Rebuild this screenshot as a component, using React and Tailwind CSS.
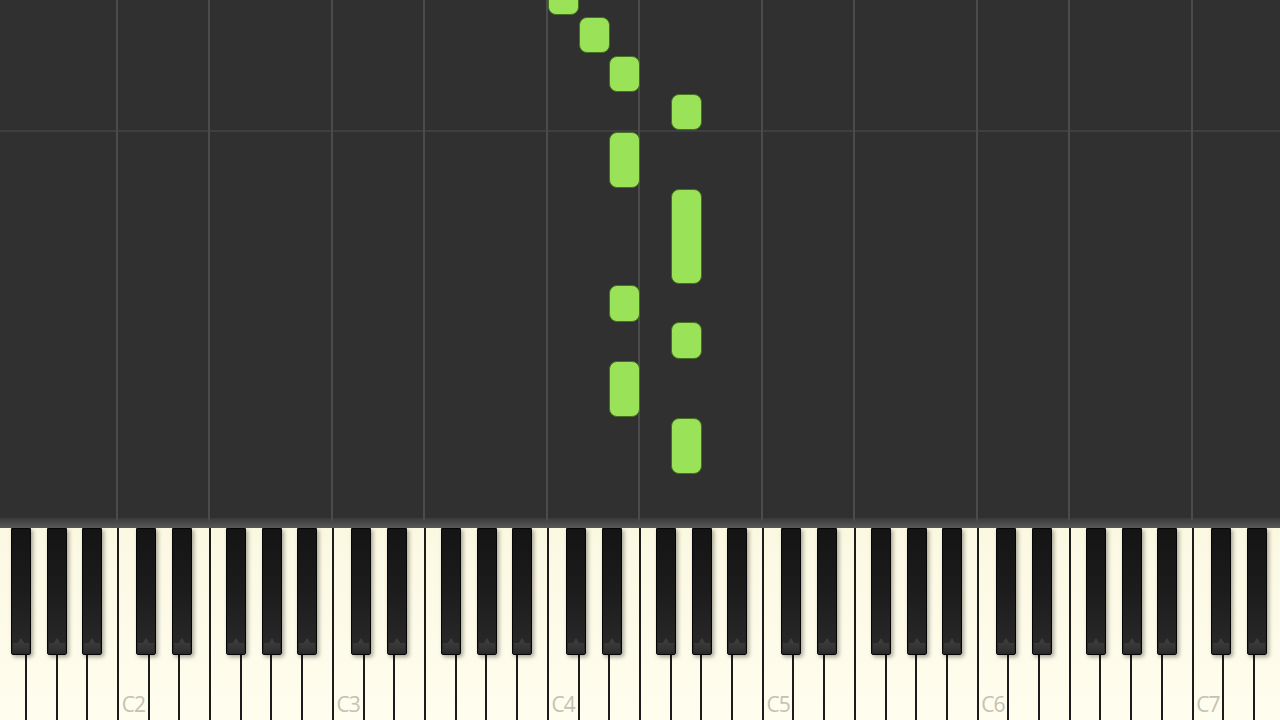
import React from 'react';

const OCTAVE = 215;
const FIRST_C = -98; // C1 left edge
const WHITE_NAMES = ['C', 'D', 'E', 'F', 'G', 'A', 'B'];
const BLACK_OFFSETS = [19, 55, 109, 145, 180];

// white keys from F1 to E7
const whiteKeys = [];
for (let i = 3; i < 3 + 42; i++) {
  const octave = 1 + Math.floor(i / 7);
  const name = WHITE_NAMES[i % 7];
  whiteKeys.push({ id: `${name}${octave}`, label: name === 'C' ? `C${octave}` : null });
}

const blackKeys = [];
for (let o = 0; o < 7; o++) {
  const start = FIRST_C + o * OCTAVE;
  BLACK_OFFSETS.forEach((off) => {
    const x = start + off;
    if (x + 20 > 0 && x < 1280) blackKeys.push(x);
  });
}

const gridLines = [117, 209, 332, 424, 547, 639, 762, 854, 977, 1069, 1192];

// column x positions for C4, D4, E4, G4
const notes = [
  { x: 548, top: -30, bottom: 15 },
  { x: 579, top: 17, bottom: 53 },
  { x: 609, top: 56, bottom: 92 },
  { x: 671, top: 94, bottom: 130 },
  { x: 609, top: 132, bottom: 188 },
  { x: 671, top: 189, bottom: 284 },
  { x: 609, top: 285, bottom: 322 },
  { x: 671, top: 322, bottom: 359 },
  { x: 609, top: 361, bottom: 417 },
  { x: 671, top: 418, bottom: 474 },
];

const App = () => {
  return (
    <div className="w-[1280px] h-[720px] overflow-hidden flex flex-col bg-[#303030]" style={{ fontFamily: '"Open Sans", "Liberation Sans", sans-serif' }}>
      {/* note roll */}
      <div className="relative h-[518px] shrink-0 bg-[#303030]">
        <div className="absolute left-0 right-0 top-[130px] h-[2px] bg-[#3f3f3f]" />
        {gridLines.map((x) => (
          <div key={x} className="absolute top-0 bottom-0 w-[2px] bg-[#4b4b4b]" style={{ left: x - 1 }} />
        ))}
        {notes.map((n, i) => (
          <div
            key={i}
            className="absolute w-[31px] rounded-[8px] border border-[#45701f] bg-[#9ae257]"
            style={{ left: n.x, top: n.top, height: n.bottom - n.top }}
          />
        ))}
      </div>

      {/* bar above keys */}
      <div className="relative h-[9px] shrink-0 bg-gradient-to-b from-[#3a3a3a] to-[#565656]">
        {gridLines.map((x) => (
          <div key={x} className="absolute top-0 h-[3px] w-[2px] bg-[#4a4a4a]" style={{ left: x - 1 }} />
        ))}
      </div>
      <div className="h-[1px] shrink-0 bg-[#b0302a]" />

      {/* keyboard */}
      <div className="relative flex-1 overflow-hidden bg-[#fdfbe7]">
        <div className="flex h-full -ml-[5.86px]">
          {whiteKeys.map((k) => (
            <div
              key={k.id}
              className="relative h-full w-[30.714px] shrink-0 border-l-2 border-[#1c1c1c] bg-gradient-to-b from-[#fbf8e2] to-[#fffdee] flex items-end justify-center pb-[5px]"
            >
              {k.label && (
                <span className="text-[21px] leading-none tracking-[-1px] text-[#c4c2b2]">{k.label}</span>
              )}
            </div>
          ))}
        </div>
        {blackKeys.map((x) => (
          <div
            key={x}
            className="absolute top-0 h-[127px] w-[20px] rounded-b-[2px] border border-[#050505] bg-gradient-to-b from-[#141414] via-[#1c1c1c] to-[#2a2a2a] shadow-[2px_2px_4px_rgba(0,0,0,0.35)] flex flex-col justify-end"
            style={{ left: x }}
          >
            <div className="h-[14px] mx-[1px] mb-[2px] bg-gradient-to-b from-[#404040] to-[#2e2e2e] [clip-path:polygon(0_35%,30%_35%,50%_0,70%_35%,100%_35%,100%_100%,0_100%)]" />
          </div>
        ))}
      </div>
    </div>
  );
};

export default App;
